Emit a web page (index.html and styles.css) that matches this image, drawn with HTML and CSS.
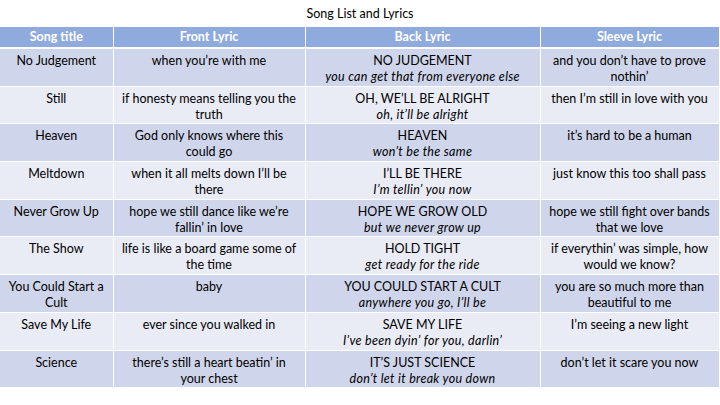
FILE: index.html
```html
<!DOCTYPE html>
<html>
<head>
<meta charset="utf-8">
<link rel="stylesheet" href="styles.css">
</head>
<body>
<div class="title">Song List and Lyrics</div>
<table class="songs">
  <colgroup>
    <col class="c1"><col class="c2"><col class="c3"><col class="c4">
  </colgroup>
  <thead>
    <tr><th>Song title</th><th>Front Lyric</th><th>Back Lyric</th><th>Sleeve Lyric</th></tr>
  </thead>
  <tbody>
    <tr class="odd"><td>No Judgement</td><td>when you’re with me</td><td>NO JUDGEMENT<br><i>you can get that from everyone else</i></td><td>and you don’t have to prove nothin’</td></tr>
    <tr class="even"><td>Still</td><td>if honesty means telling you the truth</td><td>OH, WE’LL BE ALRIGHT<br><i>oh, it’ll be alright</i></td><td>then I’m still in love with you</td></tr>
    <tr class="odd"><td>Heaven</td><td>God only knows where this could go</td><td>HEAVEN<br><i>won’t be the same</i></td><td>it’s hard to be a human</td></tr>
    <tr class="even"><td>Meltdown</td><td>when it all melts down I’ll be there</td><td>I’LL BE THERE<br><i>I’m tellin’ you now</i></td><td>just know this too shall pass</td></tr>
    <tr class="odd"><td>Never Grow Up</td><td>hope we still dance like we’re fallin’ in love</td><td>HOPE WE GROW OLD<br><i>but we never grow up</i></td><td>hope we still fight over bands that we love</td></tr>
    <tr class="even"><td>The Show</td><td>life is like a board game some of the time</td><td>HOLD TIGHT<br><i>get ready for the ride</i></td><td>if everythin’ was simple, how would we know?</td></tr>
    <tr class="odd"><td>You Could Start a Cult</td><td>baby</td><td>YOU COULD START A CULT<br><i>anywhere you go, I’ll be</i></td><td>you are so much more than beautiful to me</td></tr>
    <tr class="even"><td>Save My Life</td><td>ever since you walked in</td><td>SAVE MY LIFE<br><i>I’ve been dyin’ for you, darlin’</i></td><td>I’m seeing a new light</td></tr>
    <tr class="odd"><td>Science</td><td>there’s still a heart beatin’ in your chest</td><td>IT’S JUST SCIENCE<br><i>don’t let it break you down</i></td><td>don’t let it scare you now</td></tr>
  </tbody>
</table>
</body>
</html>
```
FILE: styles.css
```css
html, body {
  margin: 0;
  padding: 0;
  background: #ffffff;
}
body {
  width: 720px;
  font-family: "Lato", "Open Sans", sans-serif;
  font-size: 12.5px;
  color: #000;
}
.title {
  height: 27px;
  line-height: 28px;
  text-align: center;
  font-size: 12.5px;
}
.songs {
  width: 719px;
  border-collapse: collapse;
  table-layout: fixed;
}
.c1 { width: 113px; }
.c2 { width: 192px; }
.c3 { width: 235px; }
.c4 { width: 179px; }
.songs th {
  background: #8faadc;
  color: #ffffff;
  font-weight: 700;
  height: 20px;
  padding: 0 4px;
  line-height: 20px;
  border: 1px solid #ffffff;
  border-top: none;
  border-bottom: 2px solid #ffffff;
}
.songs td {
  text-align: center;
  vertical-align: top;
  line-height: 16px;
  height: 32px;
  padding: 4px 6px 0.7px 6px;
  border: 1px solid #ffffff;
}
.songs tr th:first-child, .songs tr td:first-child { border-left: none; }
.odd td { background: #cfd5ea; }
.even td { background: #e9ebf5; }
.songs i { font-style: italic; letter-spacing: 0.3px; }
```
